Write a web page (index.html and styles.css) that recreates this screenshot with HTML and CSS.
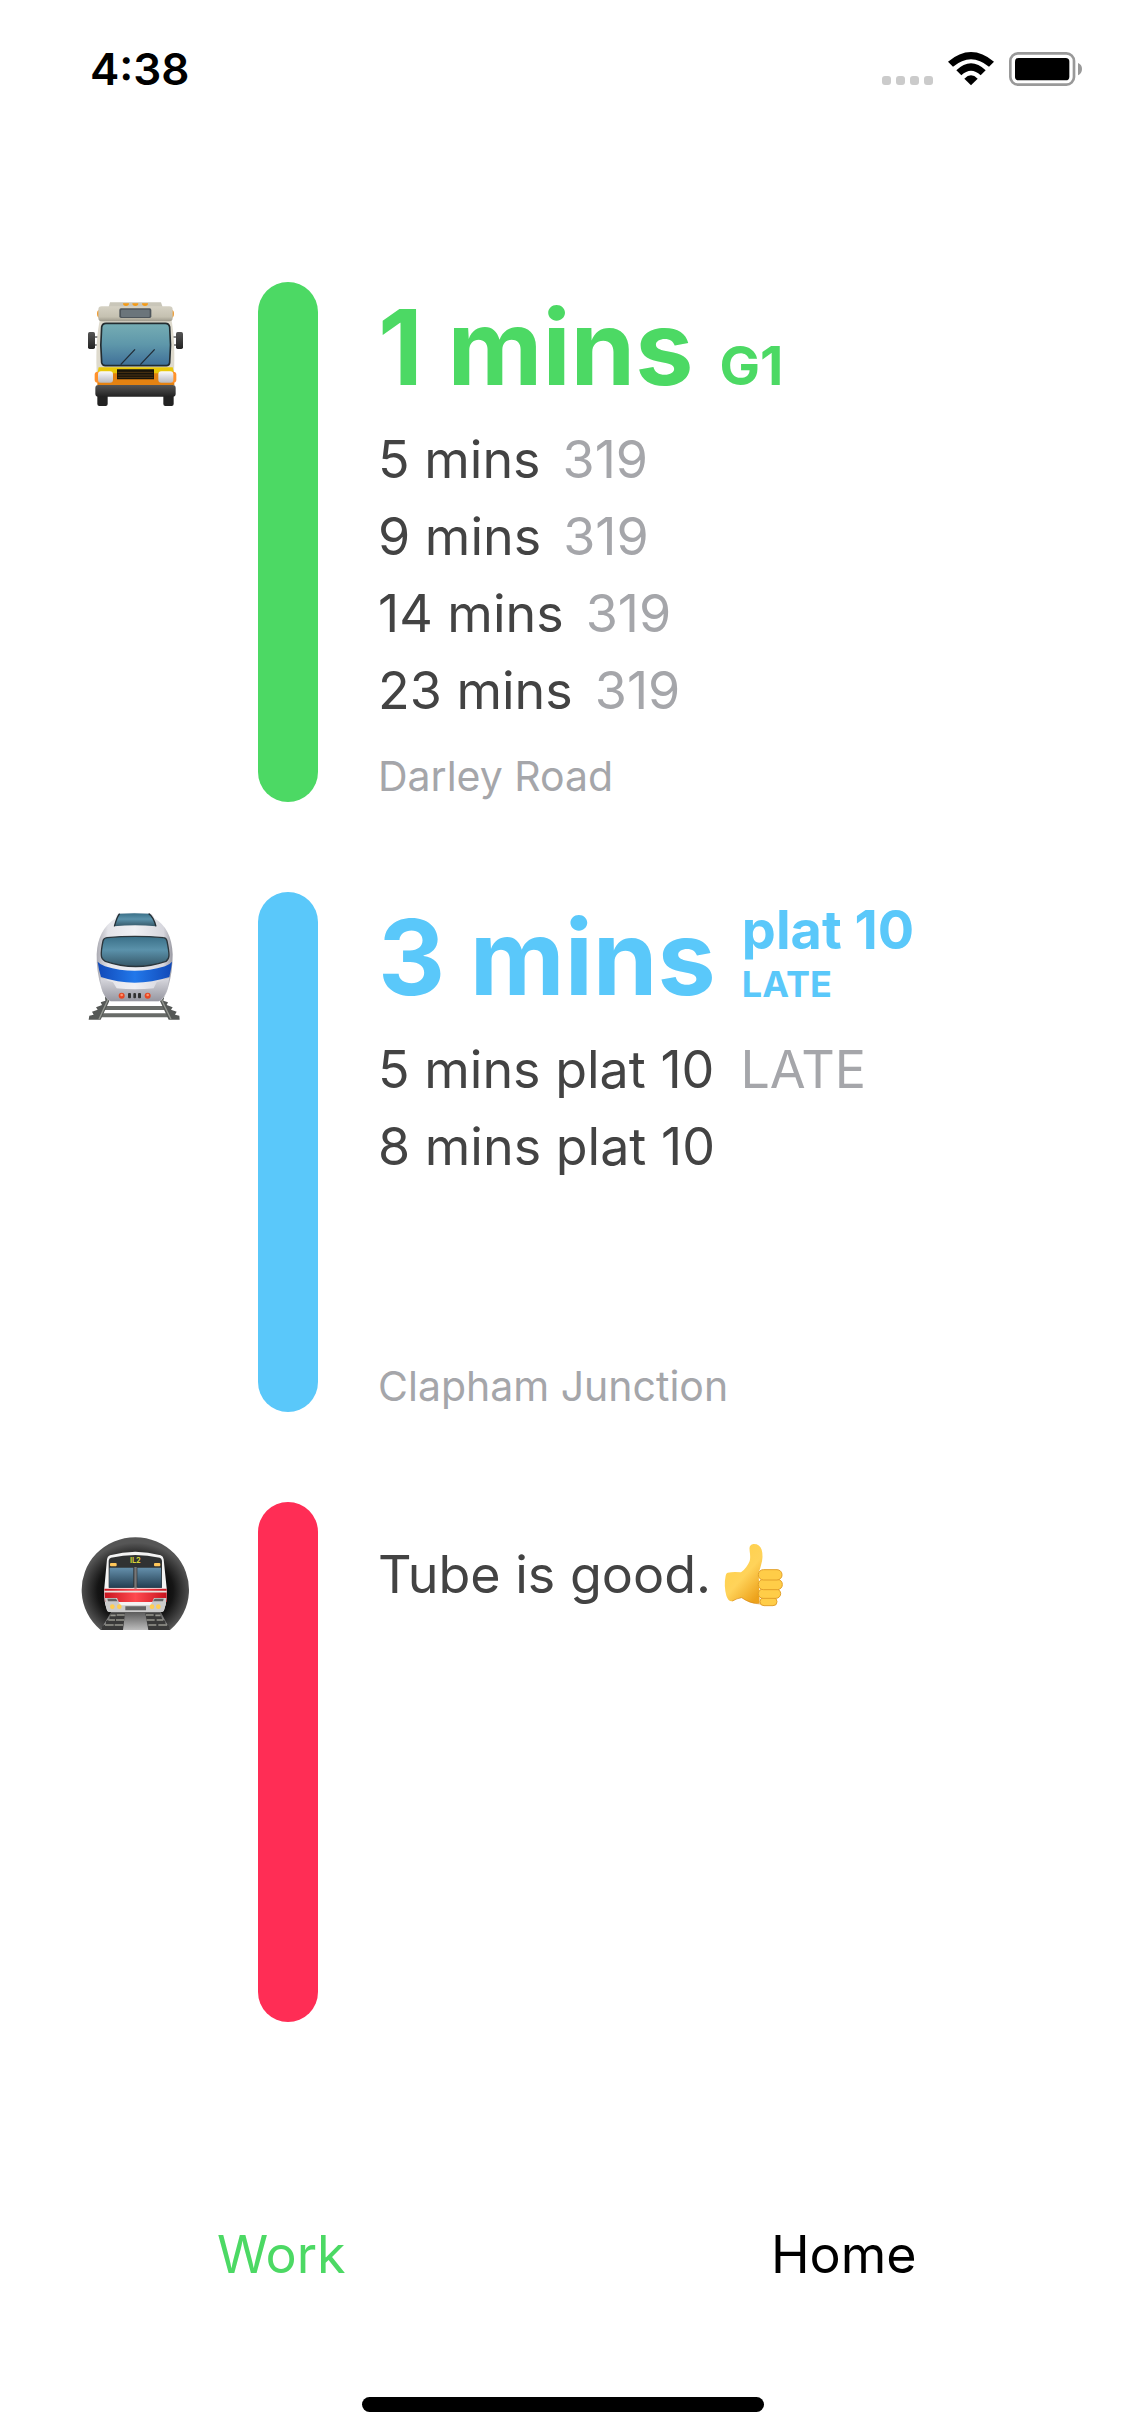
FILE: index.html
```html
<!DOCTYPE html>
<html lang="en">
<head>
<meta charset="utf-8">
<meta name="viewport" content="width=device-width, initial-scale=1">
<title>Departures</title>
<link rel="stylesheet" href="styles.css">
</head>
<body>
<div class="screen">
  <header class="status">
    <time class="clock">4:38</time>
    <svg class="status-icons" viewBox="60 60 612 114" role="img" aria-label="No signal, Wi-Fi on, battery full">
      <g fill="#cbcbcb">
        <rect x="66" y="138" width="27" height="27" rx="9"/>
        <rect x="108" y="138" width="27" height="27" rx="9"/>
        <rect x="150" y="138" width="27" height="27" rx="9"/>
        <rect x="192" y="138" width="27" height="27" rx="9"/>
      </g>
      <path d="M264 95Q333 37 402 95L387 110Q333 65 279 110Z"/>
      <path d="M289 121Q333 79 377 121L362 136Q333 109 304 136Z"/>
      <path d="M313 146Q333 126 353 146L333 166Z"/>
      <rect x="451" y="70" width="191" height="94" rx="23" fill="none" stroke="#999" stroke-width="8"/>
      <rect x="465" y="84" width="163" height="67" rx="11"/>
      <path d="M654 99Q666 104 666 117T654 136Z" fill="#999"/>
    </svg>
  </header>

  <main class="board">
    <section class="line line-bus">
      <svg class="mode" viewBox="30 60 330 330" role="img" aria-label="Bus">
        <defs>
          <linearGradient id="busGlass" x2="0" y2="1"><stop stop-color="#76adb4"/><stop offset=".5" stop-color="#5e97aa"/><stop offset="1" stop-color="#3f6f98"/></linearGradient>
          <linearGradient id="cream" x2="0" y2="1"><stop stop-color="#d5d1c3"/><stop offset=".7" stop-color="#c5c1b1"/><stop offset="1" stop-color="#9c988a"/></linearGradient>
          <linearGradient id="rubber" x2="0" y2="1"><stop stop-color="#555"/><stop offset="1" stop-color="#222"/></linearGradient>
          <linearGradient id="lamp" x2="0" y2="1"><stop stop-color="#fafafc"/><stop offset="1" stop-color="#b9bac0"/></linearGradient>
        </defs>
        <path d="M68 171h20M306 171h18M68 195h20M306 195h18" stroke="#666" stroke-width="5"/>
        <rect x="54" y="156" width="21" height="51" rx="5" fill="url(#rubber)"/>
        <rect x="318" y="156" width="21" height="51" rx="5" fill="url(#rubber)"/>
        <path d="M82 340h31v32q0 6-6 6H88q-6 0-6-6zM280 340h31v32q0 6-6 6h-19q-6 0-6-6z" fill="#222"/>
        <path d="M120 67h153l6 18H115z" fill="#c9c6b9"/>
        <path d="M159 70h18q0 8-9 8t-9-8M187 70h18q0 8-9 8t-9-8M216 70h18q0 8-9 8t-9-8" fill="#f59b16"/>
        <path d="M88 90q-7 0-7 11t7 12zM305 90q7 0 7 11t-7 12z" fill="#ef9d35"/>
        <path d="M90 118h214q12 60 8 160l-4 35H86l-6-35q-4-100 10-160z" fill="#dedacd"/>
        <path d="M86 262h222l5 20H82z" fill="#e8c80a"/>
        <path d="M82 280h231v36H82z" fill="#e38212"/>
        <rect x="85" y="79" width="223" height="45" rx="10" fill="url(#cream)"/>
        <rect x="148" y="85" width="96" height="29" rx="5" fill="#4d555b"/>
        <rect x="153" y="89" width="86" height="22" rx="3" fill="#6b757b"/>
        <path d="M108 130h178q11 0 13 11 5 53 0 107-1 9-10 9H106q-9 0-11-9-5-54 0-107 2-11 13-11z" fill="url(#busGlass)" stroke="#232c30" stroke-width="5"/>
        <path d="M152 254l43-46M211 254l43-46" stroke="#222d37" stroke-width="4"/>
        <rect x="74" y="275" width="22" height="33" rx="9" fill="#ff922c"/><rect x="297" y="275" width="22" height="33" rx="9" fill="#ff922c"/>
        <rect x="84" y="274" width="45" height="34" rx="9" fill="url(#lamp)"/>
        <rect x="265" y="274" width="45" height="34" rx="9" fill="url(#lamp)"/>
        <path d="M141 268h111v30H141z" fill="#17130b"/>
        <path d="M143 277h107M143 285h107M143 292h107" stroke="#694616" stroke-width="2"/>
        <rect x="76" y="315" width="241" height="35" rx="9" fill="url(#rubber)"/>
      </svg>
      <div class="bar"></div>
      <div class="info">
        <h2 class="next"><span>1 mins</span><span class="route">G1</span></h2>
        <ul class="later">
          <li>5 mins<span class="note">319</span></li>
          <li>9 mins<span class="note">319</span></li>
          <li>14 mins<span class="note">319</span></li>
          <li>23 mins<span class="note">319</span></li>
        </ul>
        <p class="stop">Darley Road</p>
      </div>
    </section>

    <section class="line line-train">
      <svg class="mode" viewBox="30 60 330 330" role="img" aria-label="Train">
        <defs>
          <linearGradient id="trainGlass" x2="0" y2="1"><stop stop-color="#396f87"/><stop offset=".45" stop-color="#5b92ab"/><stop offset="1" stop-color="#365768"/></linearGradient>
          <linearGradient id="shell"><stop stop-color="#aaaab2"/><stop offset=".15" stop-color="#e4e4e9"/><stop offset=".5" stop-color="#f0f0f4"/><stop offset=".88" stop-color="#d6d6dd"/><stop offset="1" stop-color="#9999a2"/></linearGradient>
          <linearGradient id="stripe"><stop stop-color="#1149b8"/><stop offset=".5" stop-color="#2278ea"/><stop offset="1" stop-color="#1149b8"/></linearGradient>
          <linearGradient id="skirt" x2="0" y2="1"><stop stop-color="#dadae0"/><stop offset="1" stop-color="#9696a0"/></linearGradient>
        </defs>
        <path d="M106 316h176v10H106zM100 348h189v12H100zM92 370h202v12H92z" fill="#686b68"/>
        <path d="M105 318h20L92 389H56l2-12 13-3-5-9 17-6-5-7 18-7-4-8 14-5zM283 318h-20l33 71h33l-1-12-13-3 5-9-17-6 5-7-18-7 4-8-14-5z" fill="#555856"/>
        <path d="M117 322L87 388M271 322l32 66" stroke="#92958f" stroke-width="4"/>
        <path d="M145 70q50-4 95 0 8 2 13 15 52 30 55 108 0 53-14 101-7 29-25 40H121q-20-12-27-40-15-49-14-101 3-74 57-108 3-13 8-15z" fill="url(#shell)"/>
        <path d="M91 263q17 8 38 14l11 18q55 6 111 0l9-18q21-6 38-14l-7 36q-9 27-25 35H122q-19-11-26-35z" fill="url(#skirt)"/>
        <path d="M148 71q46-3 88 0 8 0 22 38-63-7-125 0 11-35 15-38z" fill="url(#trainGlass)"/>
        <path d="M149 71q-7 6-16 38M236 71q14 9 22 38" fill="none" stroke="#222d33" stroke-width="4"/>
        <path d="M111 143q84-8 169 0 9 0 11 10 6 30 6 43 0 12-9 18-91 31-182 0-12-7-12-18-1-14 5-43 2-9 12-10z" fill="url(#trainGlass)" stroke="#2b363c" stroke-width="4"/>
        <path d="M83 215q8 9 22 14 88 27 180 0 14-5 21-14-2 21-8 46-105 34-205 0-7-22-10-46z" fill="url(#stripe)"/>
        <circle cx="155" cy="317" r="9" fill="#e74724"/><circle cx="233" cy="317" r="9" fill="#e74724"/>
        <circle cx="155" cy="315" r="4" fill="#ff946d"/><circle cx="233" cy="315" r="4" fill="#ff946d"/>
        <rect x="174" y="309" width="9" height="16" rx="3" fill="#333"/><rect x="190" y="309" width="8" height="16" rx="3" fill="#333"/><rect x="204" y="309" width="9" height="16" rx="3" fill="#333"/>
      </svg>
      <div class="bar"></div>
      <div class="info">
        <h2 class="next"><span>3 mins</span><span class="platform"><span>plat 10</span><span class="late">LATE</span></span></h2>
        <ul class="later">
          <li>5 mins plat 10<span class="note">LATE</span></li>
          <li>8 mins plat 10</li>
        </ul>
        <p class="stop">Clapham Junction</p>
      </div>
    </section>

    <section class="line line-tube">
      <svg class="mode" viewBox="30 93 330 330" role="img" aria-label="Tube">
        <defs>
          <radialGradient id="tunnel" cx=".5" cy=".58" r=".52"><stop offset=".45" stop-color="#050505"/><stop offset=".68" stop-color="#151515"/><stop offset="1" stop-color="#565656"/></radialGradient>
          <linearGradient id="trackbed" x2="0" y2="1"><stop stop-color="#555"/><stop offset="1" stop-color="#bdbdbd"/></linearGradient>
          <linearGradient id="tubeGlass" x2="0" y2="1"><stop stop-color="#6590ac"/><stop offset="1" stop-color="#233e51"/></linearGradient>
          <linearGradient id="red"><stop stop-color="#c8141f"/><stop offset=".5" stop-color="#ff4a4f"/><stop offset="1" stop-color="#c8141f"/></linearGradient>
        </defs>
        <path d="M92 423A161 158 0 1 1 300 423Z" fill="url(#tunnel)"/>
        <path d="M125 366h146l29 57H92z" fill="url(#trackbed)"/>
        <path d="M121 373h44l-6 50H93l4-12 10-6 1-9 10-5zM226 373h44l7 18 9 5 1 9 10 6 3 12h-65z" fill="#393939"/>
        <path d="M121 379h16M115 393h20M105 408h26M140 378h24M138 393h24M134 408h25M228 378h23M230 393h24M235 408h24M256 379h16M260 393h20M265 408h26" stroke="#96968f" stroke-width="5"/>
        <path d="M120 199q38-10 76-11 38 1 76 11 8 3 9 12l10 96q0 34-8 53-1 9-10 9H120q-9 0-10-9-8-19-8-53l9-96q1-9 9-12z" fill="#f3f3f3"/>
        <path d="M123 206q73-16 146 0 6 2 7 9v81H116v-81q1-7 7-9z" fill="#303233"/>
        <path d="M119 236h71v60h-73zM202 236h71l2 60h-73z" fill="url(#tubeGlass)"/>
        <path d="M193 234h7v65h-7z" fill="#777"/>
        <rect x="120" y="222" width="20" height="10" rx="3" fill="#ffc75a"/><rect x="252" y="222" width="19" height="10" rx="3" fill="#ffc75a"/>
        <text class="tube-sign" x="196" y="223" text-anchor="middle">IL2</text>
        <path d="M103 299h187v40H105z" fill="url(#red)"/>
        <path d="M103 308h187" stroke="#e8e3df" stroke-width="5"/>
        <path d="M105 327h36l10 22h91l10-22h37q0 18-6 33-1 9-10 9H120q-9 0-10-9-5-15-5-33z" fill="#cbcbcb"/>
        <path d="M112 329h26l5 8h-29zM254 329h27l-2 8h-30zM166 352h62v12h-62z" fill="#646464"/>
        <g fill="#ffce52"><circle cx="127" cy="353" r="7"/><circle cx="148" cy="353" r="7"/><circle cx="246" cy="353" r="7"/><circle cx="265" cy="353" r="7"/></g>
      </svg>
      <div class="bar"></div>
      <div class="info">
        <p class="good">Tube is good.
          <svg class="thumb" viewBox="1090 95 186 192" role="img" aria-label="Thumbs up">
            <defs><linearGradient id="skin" x2=".7" y2="1"><stop stop-color="#ffcf45"/><stop offset=".6" stop-color="#ffd35a"/><stop offset="1" stop-color="#eda21b"/></linearGradient></defs>
            <path d="M1104 184q18-4 40-1 17-12 26-34 3-10 0-29-4-20 11-22 19-1 25 17 6 20-2 47-4 16-7 22l3 92q-25 4-54-17-16 1-26 10-13 4-20-16-8-31-2-60 1-8 6-9z" fill="url(#skin)"/>
            <path d="M1118 269q14-8 28-10 25 18 58 19" fill="none" stroke="#d88b1a" stroke-width="2"/>
            <g fill="#ffcd48" stroke="#e3a02a" stroke-width="3">
              <rect x="1201" y="259" width="51" height="24" rx="12"/>
              <rect x="1196" y="233" width="67" height="28" rx="14"/>
              <rect x="1196" y="204" width="72" height="31" rx="15"/>
              <rect x="1196" y="175" width="71" height="31" rx="15"/>
            </g>
          </svg>
        </p>
      </div>
    </section>
  </main>

  <nav class="tabs" aria-label="Destination">
    <button class="tab tab-active" type="button">Work</button>
    <button class="tab" type="button">Home</button>
  </nav>
  <div class="home-indicator"></div>
</div>
</body>
</html>
```
FILE: styles.css
```css
* {
  box-sizing: border-box;
}

body {
  margin: 0;
  background: #fff;
  color: #434343;
  font-family: Inter, "Liberation Sans", sans-serif;
  font-size: 52px;
}

h2,
p,
ul {
  margin: 0;
  padding: 0;
}

.screen {
  display: flex;
  flex-direction: column;
  min-height: 100vh;
}

.status {
  display: flex;
  align-items: center;
  justify-content: space-between;
  height: 138px;
  padding: 0 41px 0 90px;
}

.clock {
  color: #000;
  font-size: 44px;
  font-weight: 600;
}

.status-icons {
  width: 204px;
  height: 38px;
}

.board {
  display: flex;
  flex-direction: column;
  gap: 90px;
  padding: 144px 40px 0 80px;
}

.line {
  --note-gap: 26px;
  display: grid;
  grid-template-columns: 118px 60px 1fr;
  column-gap: 60px;
  min-height: 520px;
}

.line-bus {
  --accent: #4cd964;
  --note-gap: 22px;
}

.line-train {
  --accent: #5ac8fa;
}

.line-tube {
  --accent: #ff2d55;
}

.mode {
  width: 110px;
  height: 110px;
  margin-top: 18px;
}

.bar {
  border-radius: 30px;
  background: var(--accent);
}

.info {
  display: flex;
  flex-direction: column;
}

.next {
  display: flex;
  align-items: baseline;
  gap: 26px;
  height: 139px;
  color: var(--accent);
  font-size: 104px;
  font-weight: 700;
  line-height: 130px;
}

.route,
.platform {
  font-size: 54px;
  line-height: 60px;
}

.platform {
  display: flex;
  flex-direction: column;
  align-self: flex-start;
  padding-top: 8px;
}

.late {
  font-size: 36px;
  line-height: 48px;
}

.later {
  list-style: none;
  line-height: 77px;
}

.note {
  margin-left: var(--note-gap);
  color: #a5a6aa;
}

.stop {
  margin-top: auto;
  color: #a5a6aa;
  font-size: 41px;
  line-height: 52px;
}

.good {
  display: flex;
  align-items: center;
  gap: 12px;
  padding-top: 34px;
  line-height: 77px;
}

.thumb {
  width: 62px;
  height: 64px;
}

.tube-sign {
  fill: #d6d437;
  font-size: 22px;
  font-weight: 700;
}

.tabs {
  display: grid;
  grid-template-columns: 1fr 1fr;
  margin-top: auto;
  margin-bottom: 93px;
}

.tab {
  height: 100px;
  padding: 0;
  border: 0;
  background: none;
  color: #000;
  font: inherit;
}

.tab-active {
  color: #4cd964;
}

.home-indicator {
  width: 402px;
  max-width: 60%;
  height: 15px;
  margin: 0 auto 24px;
  border-radius: 8px;
  background: #000;
}
```
